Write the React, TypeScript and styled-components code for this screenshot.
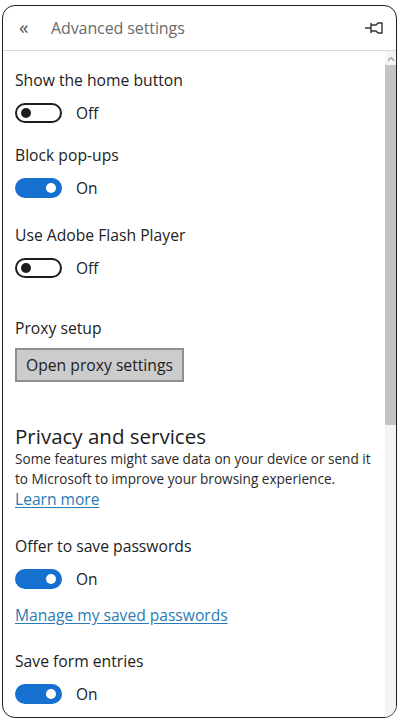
import React from "react";
import styled, { createGlobalStyle } from "styled-components";

const Global = createGlobalStyle`
  html, body {
    margin: 0;
    padding: 0;
    background: #ffffff;
  }
  body {
    font-family: "Open Sans", "Noto Sans", Arial, sans-serif;
    color: #222222;
  }
`;

export const Page = styled.div`
  width: 400px;
  height: 722px;
  padding: 5px 3px 6px 2px;
  box-sizing: border-box;
`;

export const Frame = styled.div`
  height: 100%;
  border: 1.5px solid #1f1f1f;
  border-radius: 13px;
  display: flex;
  flex-direction: column;
  overflow: hidden;
  background: #ffffff;
`;

export const Header = styled.div`
  height: 44px;
  flex: none;
  display: flex;
  align-items: center;
  padding: 0 12px 0 16px;
  border-bottom: 1px solid #d9d9d9;
`;

export const BackGlyph = styled.span`
  font-size: 19px;
  color: #555555;
  width: 32px;
  margin-top: -3px;
`;

export const Title = styled.h1`
  flex: 1;
  margin: 0;
  font-size: 16px;
  font-weight: 400;
  color: #6b6b6b;
  letter-spacing: -0.1px;
`;

export const Body = styled.div`
  flex: 1;
  display: flex;
  min-height: 0;
`;

export const Content = styled.div`
  flex: 1;
  padding: 19px 0 0 12px;
  overflow: hidden;
`;

export const ScrollBar = styled.div`
  width: 11px;
  flex: none;
  background: #f3f3f3;
  display: flex;
  flex-direction: column;
  padding-top: 1px;
`;

export const ScrollArrow = styled.div`
  height: 12px;
  display: flex;
  align-items: center;
  justify-content: center;
`;

export const Thumb = styled.div`
  height: 360px;
  background: #c3c3c3;
  margin-top: 1px;
`;

export const Label = styled.div<{ $top?: number }>`
  font-size: 15.7px;
  line-height: 20px;
  margin-top: ${(p) => p.$top ?? 0}px;
  color: #222222;
`;

export const ToggleRow = styled.div`
  display: flex;
  align-items: center;
  gap: 14px;
  height: 22px;
  margin-top: 12px;
  font-size: 15.5px;
`;

export const Track = styled.div<{ $on: boolean }>`
  width: 47px;
  height: 20px;
  box-sizing: border-box;
  border-radius: 10px;
  border: 2px solid ${(p) => (p.$on ? "#1570cf" : "#1d1d1d")};
  background: ${(p) => (p.$on ? "#1570cf" : "#ffffff")};
  display: flex;
  align-items: center;
  justify-content: ${(p) => (p.$on ? "flex-end" : "flex-start")};
  padding: 0 4px;
`;

export const Knob = styled.div<{ $on: boolean }>`
  width: 10px;
  height: 10px;
  border-radius: 50%;
  background: ${(p) => (p.$on ? "#ffffff" : "#1d1d1d")};
`;

export const ProxyButton = styled.button`
  display: block;
  margin-top: 10px;
  height: 34px;
  padding: 0 9px;
  font-family: inherit;
  font-size: 15.7px;
  color: #222222;
  background: #cccccc;
  border: 2px solid #8f8f8f;
`;

export const Heading = styled.h2`
  margin: 41px 0 0;
  font-size: 20.5px;
  line-height: 26px;
  font-weight: 400;
  color: #1c1c1c;
`;

export const Description = styled.p`
  margin: 0;
  font-size: 13.6px;
  line-height: 20px;
  color: #2a2a2a;
  white-space: nowrap;
`;

export const Link = styled.a<{ $top?: number }>`
  display: block;
  margin-top: ${(p) => p.$top ?? 0}px;
  font-size: 15.6px;
  line-height: 20px;
  color: #2b7bb4;
  text-decoration: underline;
  text-underline-offset: 2px;
`;

function Toggle({ on }: { on: boolean }) {
  return (
    <ToggleRow>
      <Track $on={on}>
        <Knob $on={on} />
      </Track>
      <span>{on ? "On" : "Off"}</span>
    </ToggleRow>
  );
}

function Setting({ label, on, top }: { label: string; on: boolean; top?: number }) {
  return (
    <>
      <Label $top={top}>{label}</Label>
      <Toggle on={on} />
    </>
  );
}

function PinIcon() {
  return (
    <svg width="20" height="14" viewBox="0 0 20 14" fill="none" stroke="#333" strokeWidth="1.4">
      <path d="M1 7h6" />
      <path d="M7 2v10" />
      <path d="M7 4h5l2-2h4v10h-4l-2-2H7" />
    </svg>
  );
}

function App() {
  return (
    <Page>
      <Global />
      <Frame>
        <Header>
          <BackGlyph>«</BackGlyph>
          <Title>Advanced settings</Title>
          <PinIcon />
        </Header>
        <Body>
          <Content>
            <Setting label="Show the home button" on={false} />
            <Setting label="Block pop-ups" on={true} top={21} />
            <Setting label="Use Adobe Flash Player" on={false} top={26} />
            <Label $top={39}>Proxy setup</Label>
            <ProxyButton>Open proxy settings</ProxyButton>
            <Heading>Privacy and services</Heading>
            <Description>
              Some features might save data on your device or send it
              <br />
              to Microsoft to improve your browsing experience.
            </Description>
            <Link href="#">Learn more</Link>
            <Setting label="Offer to save passwords" on={true} top={27} />
            <Link href="#" $top={15}>
              Manage my saved passwords
            </Link>
            <Setting label="Save form entries" on={true} top={26} />
          </Content>
          <ScrollBar>
            <ScrollArrow>
              <svg width="8" height="5" viewBox="0 0 8 5" fill="none" stroke="#9a9a9a" strokeWidth="1.2">
                <path d="M1 4.5L4 1.5L7 4.5" />
              </svg>
            </ScrollArrow>
            <Thumb />
          </ScrollBar>
        </Body>
      </Frame>
    </Page>
  );
}

export default App;
